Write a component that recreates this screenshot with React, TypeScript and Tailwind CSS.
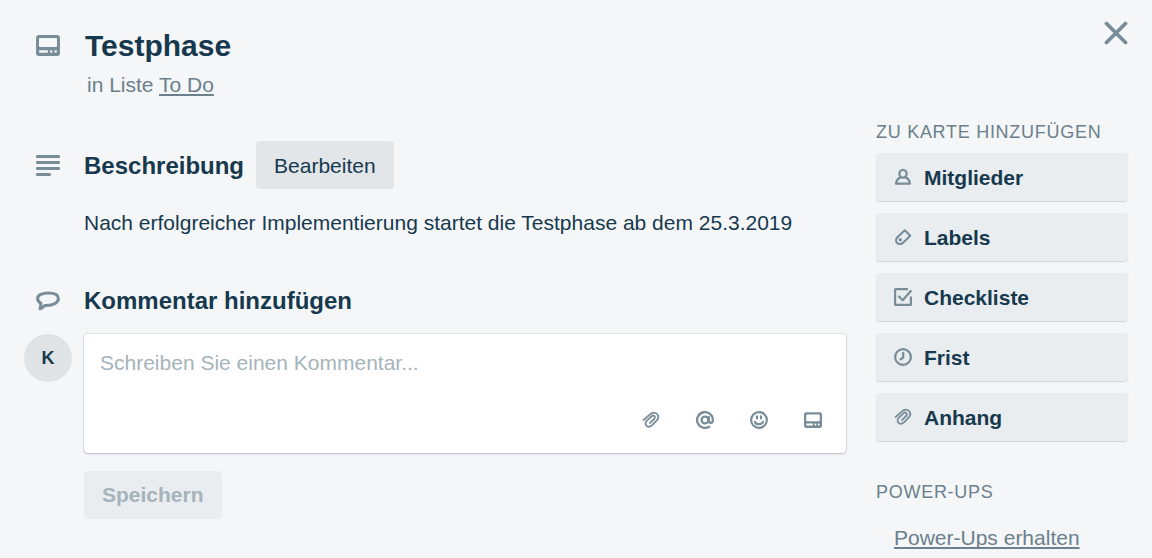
import type { ReactNode } from "react";

type IconProps = { className?: string };

function CardIcon({ className }: IconProps) {
  return (
    <svg viewBox="0 0 24 21" className={className} fill="currentColor" aria-hidden="true">
      <path
        fillRule="evenodd"
        d="M3 0h18a3 3 0 0 1 3 3v15a3 3 0 0 1-3 3H3a3 3 0 0 1-3-3V3a3 3 0 0 1 3-3ZM4 3a1 1 0 0 0-1 1v7a1 1 0 0 0 1 1h16a1 1 0 0 0 1-1V4a1 1 0 0 0-1-1ZM4.200 15.200a1.300 1.300 0 0 0 0 2.600h6.600a1.300 1.300 0 0 0 0-2.600ZM15.200 15.200a1.300 1.300 0 1 0 0 2.600 1.300 1.300 0 0 0 0-2.600ZM19.700 15.200a1.300 1.300 0 1 0 0 2.600 1.300 1.300 0 0 0 0-2.600Z"
      />
    </svg>
  );
}

function LinesIcon({ className }: IconProps) {
  return (
    <svg viewBox="0 0 24 21" className={className} fill="currentColor" aria-hidden="true">
      <rect x="0" y="0" width="24" height="3" rx="1.2" />
      <rect x="0" y="6" width="24" height="3" rx="1.2" />
      <rect x="0" y="12" width="24" height="3" rx="1.2" />
      <rect x="0" y="18" width="15" height="3" rx="1.2" />
    </svg>
  );
}

function BubbleIcon({ className }: IconProps) {
  return (
    <svg viewBox="0 0 24 20" className={className} fill="none" stroke="currentColor" strokeWidth="3" strokeLinejoin="round" aria-hidden="true">
      <path d="M12.500 2C6.300 2 1.600 4 1.600 7.600c0 2.100 1 3.600 3.200 4.500.2 2-.2 3.800-.8 5.700 2-.8 3.600-1.800 4.700-3.200C16 14.700 22.400 12.200 22.400 7.500c0-3.500-3.900-5.500-9.900-5.500Z" />
    </svg>
  );
}

function CloseIcon({ className }: IconProps) {
  return (
    <svg viewBox="0 0 24 24" className={className} fill="none" stroke="currentColor" strokeWidth="3.800" strokeLinecap="round" aria-hidden="true">
      <path d="M2.500 2.500l19 19M21.500 2.500l-19 19" />
    </svg>
  );
}

function MemberIcon({ className }: IconProps) {
  return (
    <svg viewBox="0 0 18 18" className={className} fill="none" stroke="currentColor" strokeWidth="2.300" strokeLinejoin="round" aria-hidden="true">
      <ellipse cx="9" cy="5.800" rx="3.600" ry="3.900" />
      <path d="M6.800 9.300C3.800 10.300 2.300 12.300 2.100 15.700h13.800c-.2-3.400-1.700-5.400-4.700-6.400" />
    </svg>
  );
}

function LabelIcon({ className }: IconProps) {
  return (
    <svg viewBox="0 0 18 18" className={className} fill="none" stroke="currentColor" strokeWidth="2.200" strokeLinejoin="round" aria-hidden="true">
      <path d="M10.800 2.300l5.400 5.400-7.100 7c-1.600 1.600-4.500 1.800-6 .3-1.500-1.500-1.200-4.100.3-5.700Z" />
      <circle cx="6.300" cy="11.700" r="1.700" fill="currentColor" stroke="none" />
    </svg>
  );
}

function CheckIcon({ className }: IconProps) {
  return (
    <svg viewBox="0 0 18 18" className={className} fill="none" stroke="currentColor" strokeWidth="2.200" aria-hidden="true">
      <path d="M14 1.100H1.600a.5.5 0 0 0-.5.500v14.800a.5.5 0 0 0 .5.500h14.800a.5.5 0 0 0 .5-.500V8.500" />
      <path d="M5 8.500l3.700 3.800L16.800 3" strokeLinecap="round" strokeLinejoin="round" />
    </svg>
  );
}

function ClockIcon({ className }: IconProps) {
  return (
    <svg viewBox="0 0 18 18" className={className} fill="none" stroke="currentColor" strokeWidth="2.200" aria-hidden="true">
      <circle cx="9" cy="9" r="7.900" />
      <path d="M9.200 4.800v4.700L6.500 11.300" strokeLinecap="round" strokeLinejoin="round" />
    </svg>
  );
}

function ClipIcon({ className }: IconProps) {
  return (
    <svg viewBox="0 0 18 18" className={className} fill="none" stroke="currentColor" strokeWidth="1.800" strokeLinecap="round" aria-hidden="true">
      <path d="M1.600 9l5.800-5.200c3.200-2.800 6-2.400 7.700-.7 1.700 1.800 1.400 4.500-.5 6.500l-4.400 4.500c-1.900 1.800-4.300 2-5.700.7-1.400-1.400-1.200-3.600.4-5.200l4.400-4.100c1.200-1.100 2.400-1.100 3.100-.4s.7 1.900-.3 2.900l-4.200 4.100" />
    </svg>
  );
}

function AtIcon({ className }: IconProps) {
  return (
    <svg viewBox="0 0 18 18" className={className} fill="none" stroke="currentColor" strokeWidth="2.300" strokeLinecap="round" aria-hidden="true">
      <path d="M13.200 15.700A7.900 7.900 0 1 1 16.900 9c0 1.800-.9 2.800-2.200 2.800-1.200 0-1.900-.8-1.900-2V5.800" />
      <circle cx="9" cy="9" r="3.400" />
    </svg>
  );
}

function SmileIcon({ className }: IconProps) {
  return (
    <svg viewBox="0 0 18 18" className={className} fill="none" stroke="currentColor" strokeWidth="2.200" strokeLinecap="round" aria-hidden="true">
      <circle cx="9" cy="9" r="7.900" />
      <path d="M7 5.300v2.200M11 5.300v2.200M5 10.800c1 3.200 7 3.200 8 0" />
    </svg>
  );
}

const cardActions: { label: string; icon: ReactNode }[] = [
  { label: "Mitglieder", icon: <MemberIcon className="size-[18px]" /> },
  { label: "Labels", icon: <LabelIcon className="size-[18px]" /> },
  { label: "Checkliste", icon: <CheckIcon className="size-[18px]" /> },
  { label: "Frist", icon: <ClockIcon className="size-[18px]" /> },
  { label: "Anhang", icon: <ClipIcon className="size-[18px]" /> },
];

const commentTools: { label: string; icon: ReactNode }[] = [
  { label: "Anhang hinzufügen", icon: <ClipIcon className="size-[18px]" /> },
  { label: "Mitglied erwähnen", icon: <AtIcon className="size-[18px]" /> },
  { label: "Emoji hinzufügen", icon: <SmileIcon className="size-[18px]" /> },
  { label: "Karte hinzufügen", icon: <CardIcon className="h-4 w-[18px]" /> },
];

export default function App() {
  return (
    <div className="min-h-screen bg-[#f4f6f8] px-6 font-['Liberation_Sans',Arial,sans-serif] text-[21px] leading-6 text-[#17394d]">
      <header className="flex items-start pt-5">
        <div className="flex w-[61px] shrink-0 pt-[15px] pl-3 text-[#798d99]">
          <CardIcon className="h-[21px] w-6" />
        </div>
        <div className="grow pt-2">
          <h1 className="text-[30px] leading-9 font-bold">Testphase</h1>
          <p className="pt-[9px] pl-[2px] text-[#6b808c]">
            in Liste{" "}
            <a href="#liste" className="underline decoration-2 underline-offset-2">
              To Do
            </a>
          </p>
        </div>
        <button type="button" aria-label="Schließen" className="pt-px text-[#798d99]">
          <CloseIcon className="size-6" />
        </button>
      </header>

      <div className="flex gap-[30px] pt-[23px]">
        <main className="min-w-0 grow pt-[21px]">
          <section>
            <div className="flex items-center">
              <div className="w-[60px] shrink-0 pl-3 text-[#798d99]">
                <LinesIcon className="h-[21px] w-6" />
              </div>
              <h2 className="pt-[2px] text-2xl leading-7 font-bold">Beschreibung</h2>
              <button type="button" className="ml-3 h-12 rounded-[4px] bg-[#e2e6e9] px-[18px] pt-[2px]">
                Bearbeiten
              </button>
            </div>
            <p className="pt-[22px] pl-[60px]">
              Nach erfolgreicher Implementierung startet die Testphase ab dem 25.3.2019
            </p>
          </section>

          <section className="pt-[52px]">
            <div className="flex items-center">
              <div className="w-[60px] shrink-0 pl-3 text-[#798d99]">
                <BubbleIcon className="h-5 w-6" />
              </div>
              <h2 className="text-2xl leading-7 font-bold">
                <label htmlFor="comment">Kommentar hinzufügen</label>
              </h2>
            </div>
            <div className="flex gap-3 pt-[19px]">
              <div className="flex size-12 shrink-0 items-center justify-center rounded-full bg-[#dfe3e6] text-lg font-bold">
                K
              </div>
              <form className="min-w-0 grow">
                <div className="rounded-[4px] bg-white shadow-[0_1px_2px_#091e4233,0_0_0_1px_#091e4214]">
                  <textarea
                    id="comment"
                    placeholder="Schreiben Sie einen Kommentar..."
                    className="block h-[67px] w-full resize-none bg-transparent px-4 pt-[17px] leading-6 outline-none placeholder:text-[#a5b3bb]"
                  />
                  <div className="flex justify-end gap-[18px] px-[15px] pb-[14px]">
                    {commentTools.map((tool) => (
                      <button
                        key={tool.label}
                        type="button"
                        aria-label={tool.label}
                        className="flex h-[38px] w-9 items-center justify-center text-[#798d99]"
                      >
                        {tool.icon}
                      </button>
                    ))}
                  </div>
                </div>
                <button
                  type="submit"
                  disabled
                  className="mt-[18px] h-12 rounded-[4px] bg-[#e9edf0] px-[18px] font-bold text-[#a5b3bb]"
                >
                  Speichern
                </button>
              </form>
            </div>
          </section>
        </main>

        <aside className="w-[252px] shrink-0">
          <h3 className="text-lg leading-6 tracking-[0.04em] text-[#6b808c] uppercase">Zu Karte hinzufügen</h3>
          <div className="flex flex-col gap-3 pt-[9px]">
            {cardActions.map((action) => (
              <button
                key={action.label}
                type="button"
                className="flex h-12 items-center gap-3 rounded-[4px] bg-[#e9edf0] px-[18px] font-bold shadow-[0_1px_1px_#091e4226]"
              >
                <span className="text-[#798d99]">{action.icon}</span>
                <span className="pt-[2px]">{action.label}</span>
              </button>
            ))}
          </div>
          <h3 className="pt-[39px] text-lg leading-6 tracking-[0.04em] text-[#6b808c] uppercase">Power-Ups</h3>
          <a
            href="#power-ups"
            className="mt-[22px] ml-[18px] inline-block text-[#6b808c] underline decoration-2 underline-offset-2 [text-decoration-skip-ink:none]"
          >
            Power-Ups erhalten
          </a>
        </aside>
      </div>
    </div>
  );
}
